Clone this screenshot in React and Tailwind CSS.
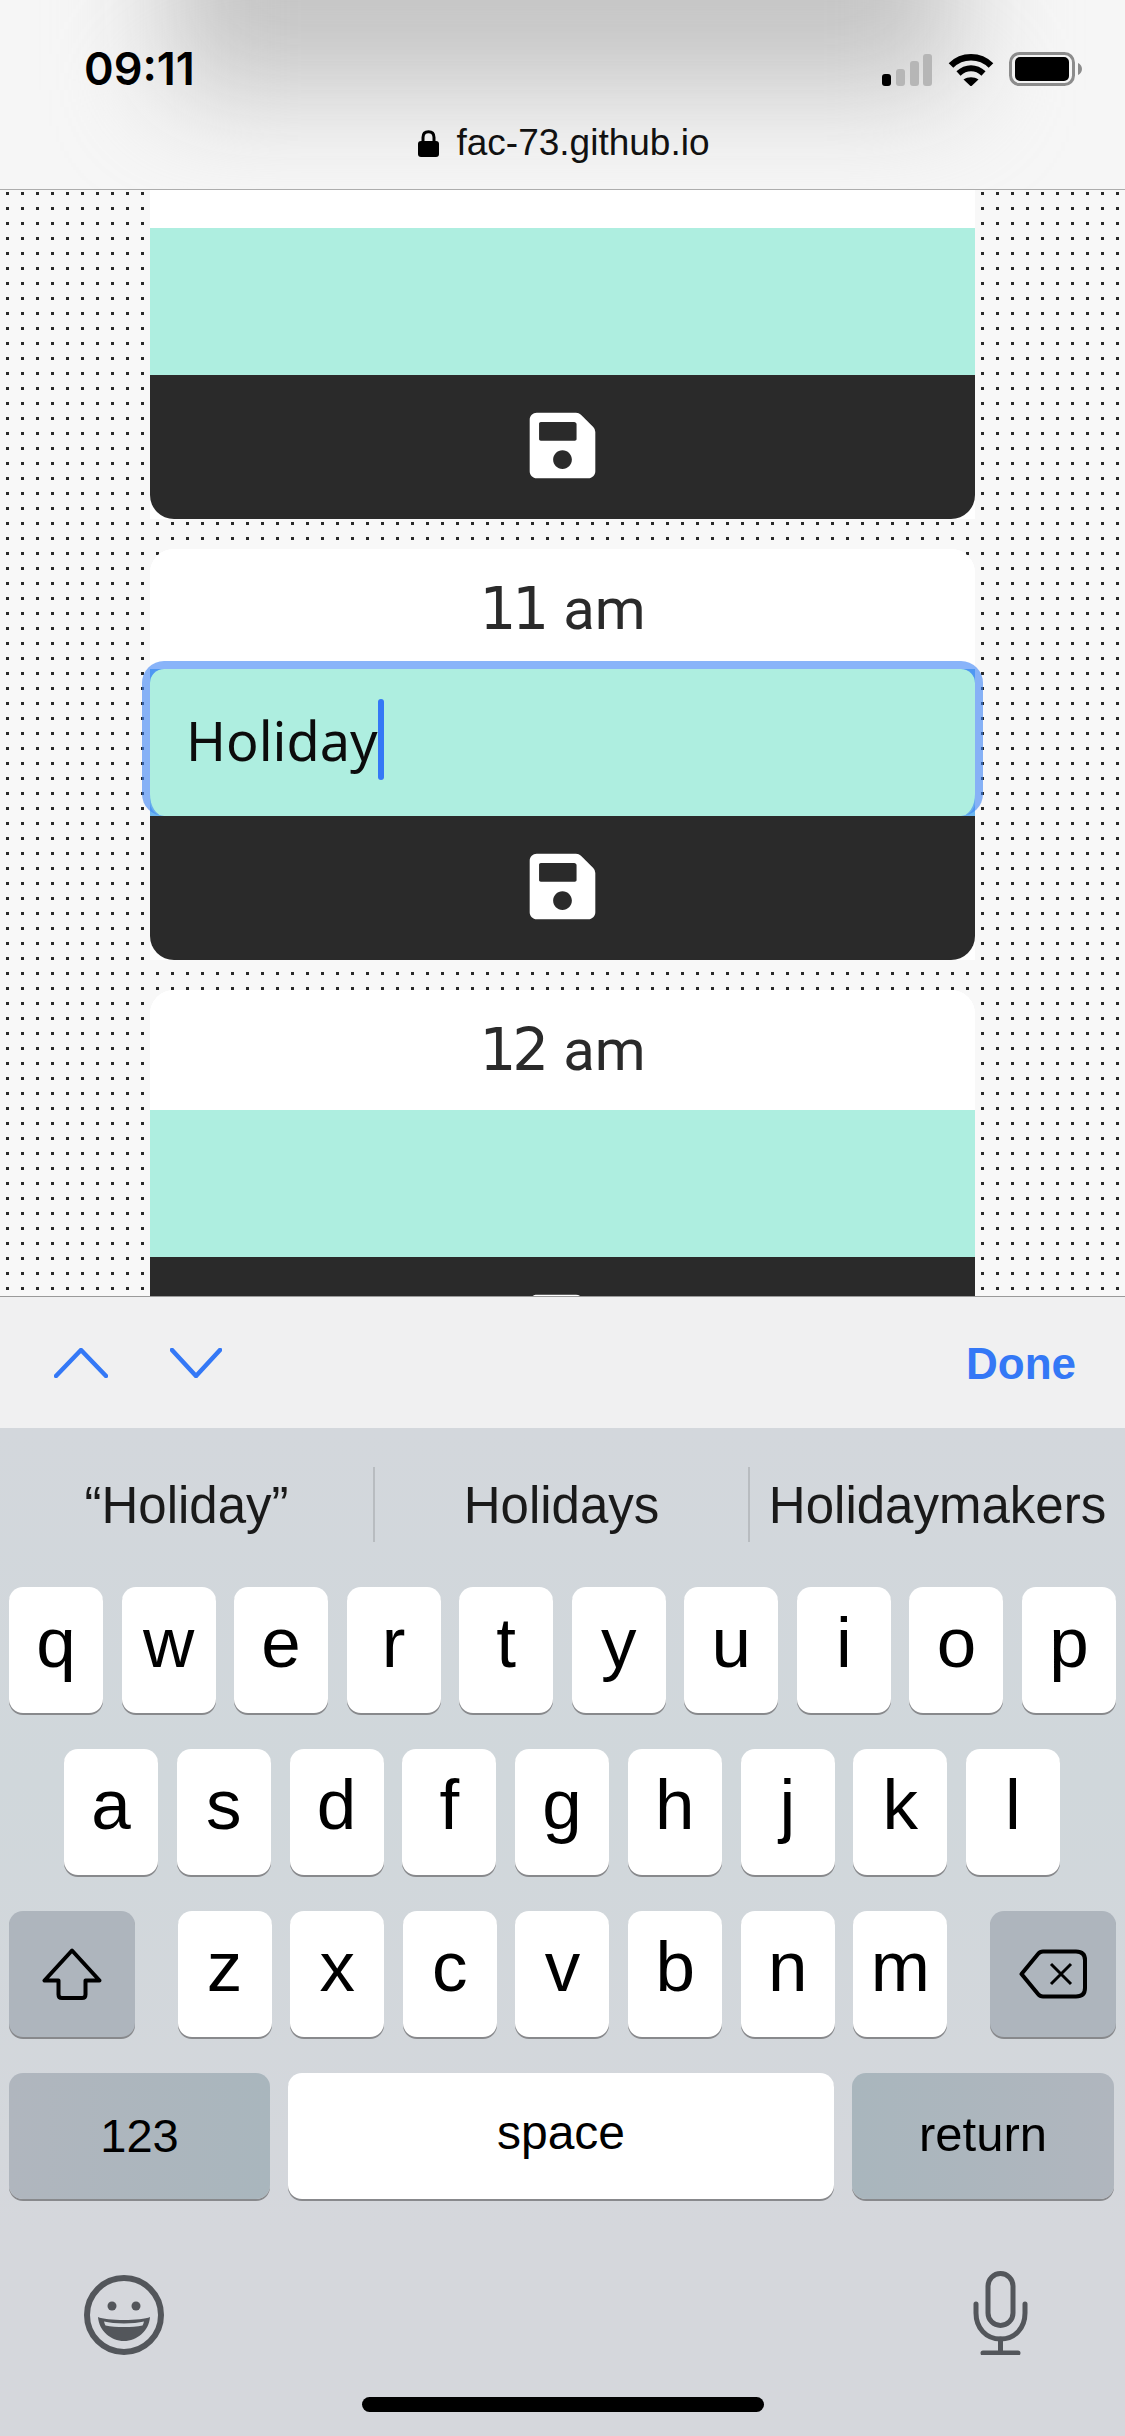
import { FaSave } from 'react-icons/fa';

const rowOne = ['q', 'w', 'e', 'r', 't', 'y', 'u', 'i', 'o', 'p'];
const rowTwo = ['a', 's', 'd', 'f', 'g', 'h', 'j', 'k', 'l'];
const rowThree = ['z', 'x', 'c', 'v', 'b', 'n', 'm'];

function Key({ label }) {
    return (
        <div className="flex h-[126px] w-[94px] justify-center rounded-[14px] bg-white pt-[20px] text-[71px] leading-none text-black shadow-[0_2px_0_#88898c]">
            {label}
        </div>
    );
}

function StatusIcons() {
    return (
        <div className="flex items-end">
            <svg width="50" height="32" viewBox="0 0 50 32">
                <rect x="0" y="20" width="9" height="12" rx="3" fill="#000" />
                <rect x="14" y="15" width="9" height="17" rx="3" fill="#b6b6b6" />
                <rect x="28" y="7" width="9" height="25" rx="3" fill="#b6b6b6" />
                <rect x="41" y="0" width="9" height="32" rx="3" fill="#b6b6b6" />
            </svg>
            <svg className="ml-[16px]" width="46" height="33" viewBox="0 0 46 33" fill="none">
                <path d="M3 12.5C14 1.5 32 1.5 43 12.5" stroke="#000" strokeWidth="6.5" />
                <path d="M10.5 20.5C18 13.5 28 13.5 35.5 20.5" stroke="#000" strokeWidth="6" />
                <path d="M15.5 26.5C20 23.5 26 23.5 30.5 26.5L23 33.5Z" fill="#000" />
            </svg>
            <svg className="ml-[15px]" width="73" height="34" viewBox="0 0 73 34">
                <rect x="1.5" y="1.5" width="63" height="31" rx="9" fill="none" stroke="#8c8c8c" strokeWidth="3" />
                <rect x="6" y="5" width="54" height="24" rx="5" fill="#000" />
                <path d="M69 11C71.5 12 73 14.5 73 17C73 19.5 71.5 22 69 23Z" fill="#8c8c8c" />
            </svg>
        </div>
    );
}

function StatusHeader() {
    return (
        <header className="relative h-[190px] shrink-0 overflow-hidden border-b border-[#adadad] bg-[#f6f6f6]">
            <div className="absolute left-[170px] right-[170px] -top-[120px] h-[210px] bg-[#c4c4c4] blur-[55px]" />
            <div className="relative flex items-center justify-between pl-[84px] pr-[43px] pt-[52px]">
                <span className="font-['Inter',sans-serif] text-[45px] font-semibold leading-[34px] text-black">09:11</span>
                <StatusIcons />
            </div>
            <div className="relative mt-[39px] flex items-center justify-center gap-[17px] pl-[3px] text-[37px] leading-[36px] text-[#111]">
                <svg width="21" height="27" viewBox="0 0 21 27" fill="none">
                    <path d="M5 13V7.5C5 4 7 1.7 10.5 1.7S16 4 16 7.5V13" stroke="#000" strokeWidth="3" />
                    <rect x="0" y="11" width="21" height="16" rx="3" fill="#000" />
                </svg>
                <span>fac-73.github.io</span>
            </div>
        </header>
    );
}

function TimeLabel({ hour, period }) {
    return (
        <div className="flex h-[120px] items-center justify-center bg-white text-[58px] leading-none text-[#2a2a2a]">
            {hour && <span className="font-['DejaVu_Sans',sans-serif] tracking-[-4px]">{hour}</span>}
            {period && <span className="ml-[18px] font-['Roboto',sans-serif]">{period}</span>}
        </div>
    );
}

function SaveBar() {
    return (
        <div className="relative flex h-[144px] items-start justify-center rounded-b-[24px] bg-[#2a2a2a] pt-[33px] text-white">
            <FaSave size={75} />
        </div>
    );
}

function Card({ hour, period, children }) {
    return (
        <div className="shrink-0 rounded-t-[24px] bg-white">
            <div className="overflow-hidden rounded-t-[24px]">
                <TimeLabel hour={hour} period={period} />
            </div>
            {children ?? <div className="h-[147px] bg-[#aeeee0]" />}
            <SaveBar />
        </div>
    );
}

function FocusedField() {
    return (
        <div className="relative h-[147px] bg-[#6cb6ee]">
            <div className="flex h-full items-center rounded-[14px] bg-[#aeeee0] pl-[36px] font-['Noto_Sans',sans-serif] text-[54px] leading-none text-[#0c0c0c]">
                <span className="-mt-[6px]">Holiday</span>
                <span className="-mt-[6px] h-[81px] w-[6px] rounded-full bg-[#3478f6]" />
            </div>
            <div className="pointer-events-none absolute -left-[8px] -right-[8px] -top-[8px] bottom-0 rounded-[22px] border-8 border-b-0 border-[#3b82f6]/60" />
        </div>
    );
}

function Schedule() {
    return (
        <main className="h-[1106px] shrink-0 overflow-hidden bg-[conic-gradient(at_3px_3px,#f8f8f8_75%,#2a2a2a_0)] bg-[length:15px_15px] bg-[position:6px_2px]">
            <div className="mx-auto -mt-[82px] flex w-[825px] flex-col gap-[30px]">
                <Card />
                <Card hour="11" period="am">
                    <FocusedField />
                </Card>
                <Card hour="12" period="am" />
            </div>
        </main>
    );
}

function AccessoryBar() {
    return (
        <div className="flex h-[132px] shrink-0 items-center justify-between border-t border-[#9a9a9a] bg-[#f0f0f1] pl-[54px] pr-[49px]">
            <div className="flex items-center gap-[62px]">
                <svg width="54" height="30" viewBox="0 0 54 30" fill="none">
                    <path d="M2 28L27 2L52 28" stroke="#3478f6" strokeWidth="4.5" strokeLinecap="round" strokeLinejoin="round" />
                </svg>
                <svg width="52" height="30" viewBox="0 0 52 30" fill="none">
                    <path d="M2 2L26 28L50 2" stroke="#3478f6" strokeWidth="4.5" strokeLinecap="round" strokeLinejoin="round" />
                </svg>
            </div>
            <span className="pt-[2px] text-[44px] font-bold leading-none text-[#3478f6]">Done</span>
        </div>
    );
}

function Suggestions() {
    return (
        <div className="flex h-[159px] pt-[39px] text-[51px] leading-none text-[#1a1a1a]">
            <div className="flex h-[75px] w-[375px] justify-center border-r-2 border-[#b8bcc0] pt-[13px]">“Holiday”</div>
            <div className="flex h-[75px] w-[375px] justify-center border-r-2 border-[#b8bcc0] pt-[13px]">Holidays</div>
            <div className="flex h-[75px] w-[375px] justify-center whitespace-nowrap pt-[13px]">Holidaymakers</div>
        </div>
    );
}

function Keyboard() {
    return (
        <div className="flex-1 bg-[linear-gradient(to_bottom,#d3d7dc,#d0d7db_35%,#d5d7dc_80%)]">
            <Suggestions />
            <div className="flex flex-col gap-[36px]">
                <div className="flex justify-between px-[9px]">
                    {rowOne.map((k) => <Key key={k} label={k} />)}
                </div>
                <div className="flex justify-between pl-[64px] pr-[65px]">
                    {rowTwo.map((k) => <Key key={k} label={k} />)}
                </div>
                <div className="flex justify-between px-[9px]">
                    <div className="flex h-[126px] w-[126px] items-center justify-center rounded-[14px] bg-[#aeb5bd] shadow-[0_2px_0_#88898c]">
                        <svg width="60" height="52" viewBox="0 0 60 52" fill="none">
                            <path d="M30 2.5L2.5 32.5H16.5V46.5Q16.5 50 20 50H40Q43.5 50 43.5 46.5V32.5H57.5Z" stroke="#000" strokeWidth="4" strokeLinejoin="round" />
                        </svg>
                    </div>
                    <div className="flex w-[770px] justify-between">
                        {rowThree.map((k) => <Key key={k} label={k} />)}
                    </div>
                    <div className="flex h-[126px] w-[126px] items-center justify-center rounded-[14px] bg-[#aeb5bd] shadow-[0_2px_0_#88898c]">
                        <svg width="68" height="50" viewBox="0 0 68 50" fill="none">
                            <path d="M2.5 25L19 5Q21 2.5 24 2.5H57Q66 2.5 66 11V39Q66 47.5 57 47.5H24Q21 47.5 19 45Z" stroke="#000" strokeWidth="4" strokeLinejoin="round" />
                            <path d="M32 15L52 35M52 15L32 35" stroke="#000" strokeWidth="3" />
                        </svg>
                    </div>
                </div>
                <div className="flex gap-[18px] pl-[9px]">
                    <div className="flex h-[126px] w-[261px] justify-center rounded-[14px] bg-[linear-gradient(to_right,#b0b6be,#a9b6bd)] pt-[39px] text-[47px] leading-none text-black shadow-[0_2px_0_#88898c]">123</div>
                    <div className="flex h-[126px] w-[546px] justify-center rounded-[14px] bg-white pt-[36px] text-[48px] leading-none text-black shadow-[0_2px_0_#88898c]">space</div>
                    <div className="flex h-[126px] w-[262px] justify-center rounded-[14px] bg-[linear-gradient(to_right,#a9b6bd,#b0b6be)] pt-[37px] text-[49px] leading-none text-black shadow-[0_2px_0_#88898c]">return</div>
                </div>
            </div>
            <div className="mt-[72px] flex items-end justify-between pl-[84px] pr-[97px]">
                <svg width="80" height="80" viewBox="0 0 80 80" fill="none">
                    <circle cx="40" cy="40" r="37" stroke="#53565b" strokeWidth="6" />
                    <circle cx="28" cy="31" r="4.5" fill="#53565b" />
                    <circle cx="52" cy="31" r="4.5" fill="#53565b" />
                    <path d="M14 42C22 46 58 46 66 42C65 56 53 66 40 66C27 66 15 56 14 42Z" fill="#53565b" />
                    <path d="M20 46.5C30 49 50 49 60 46.5C59.5 48.5 59 49.5 58.5 50.5C48 52.5 32 52.5 21.5 50.5C21 49.5 20.5 48.5 20 46.5Z" fill="#d3d7dc" />
                </svg>
                <svg width="55" height="84" viewBox="0 0 55 84" fill="none">
                    <rect x="15" y="2.5" width="25" height="52" rx="12.5" stroke="#53565b" strokeWidth="5" />
                    <path d="M3 33V42C3 57 13 68 27.5 68S52 57 52 42V33" stroke="#53565b" strokeWidth="5" strokeLinecap="round" />
                    <path d="M27.5 68V82M10 82H45" stroke="#53565b" strokeWidth="5" strokeLinecap="round" />
                </svg>
            </div>
            <div className="mx-auto mt-[42px] h-[15px] w-[402px] rounded-full bg-black" />
        </div>
    );
}

export default function App() {
    return (
        <div className="flex h-[2436px] w-[1125px] flex-col overflow-hidden font-['Liberation_Sans',sans-serif]">
            <StatusHeader />
            <Schedule />
            <AccessoryBar />
            <Keyboard />
        </div>
    );
}
